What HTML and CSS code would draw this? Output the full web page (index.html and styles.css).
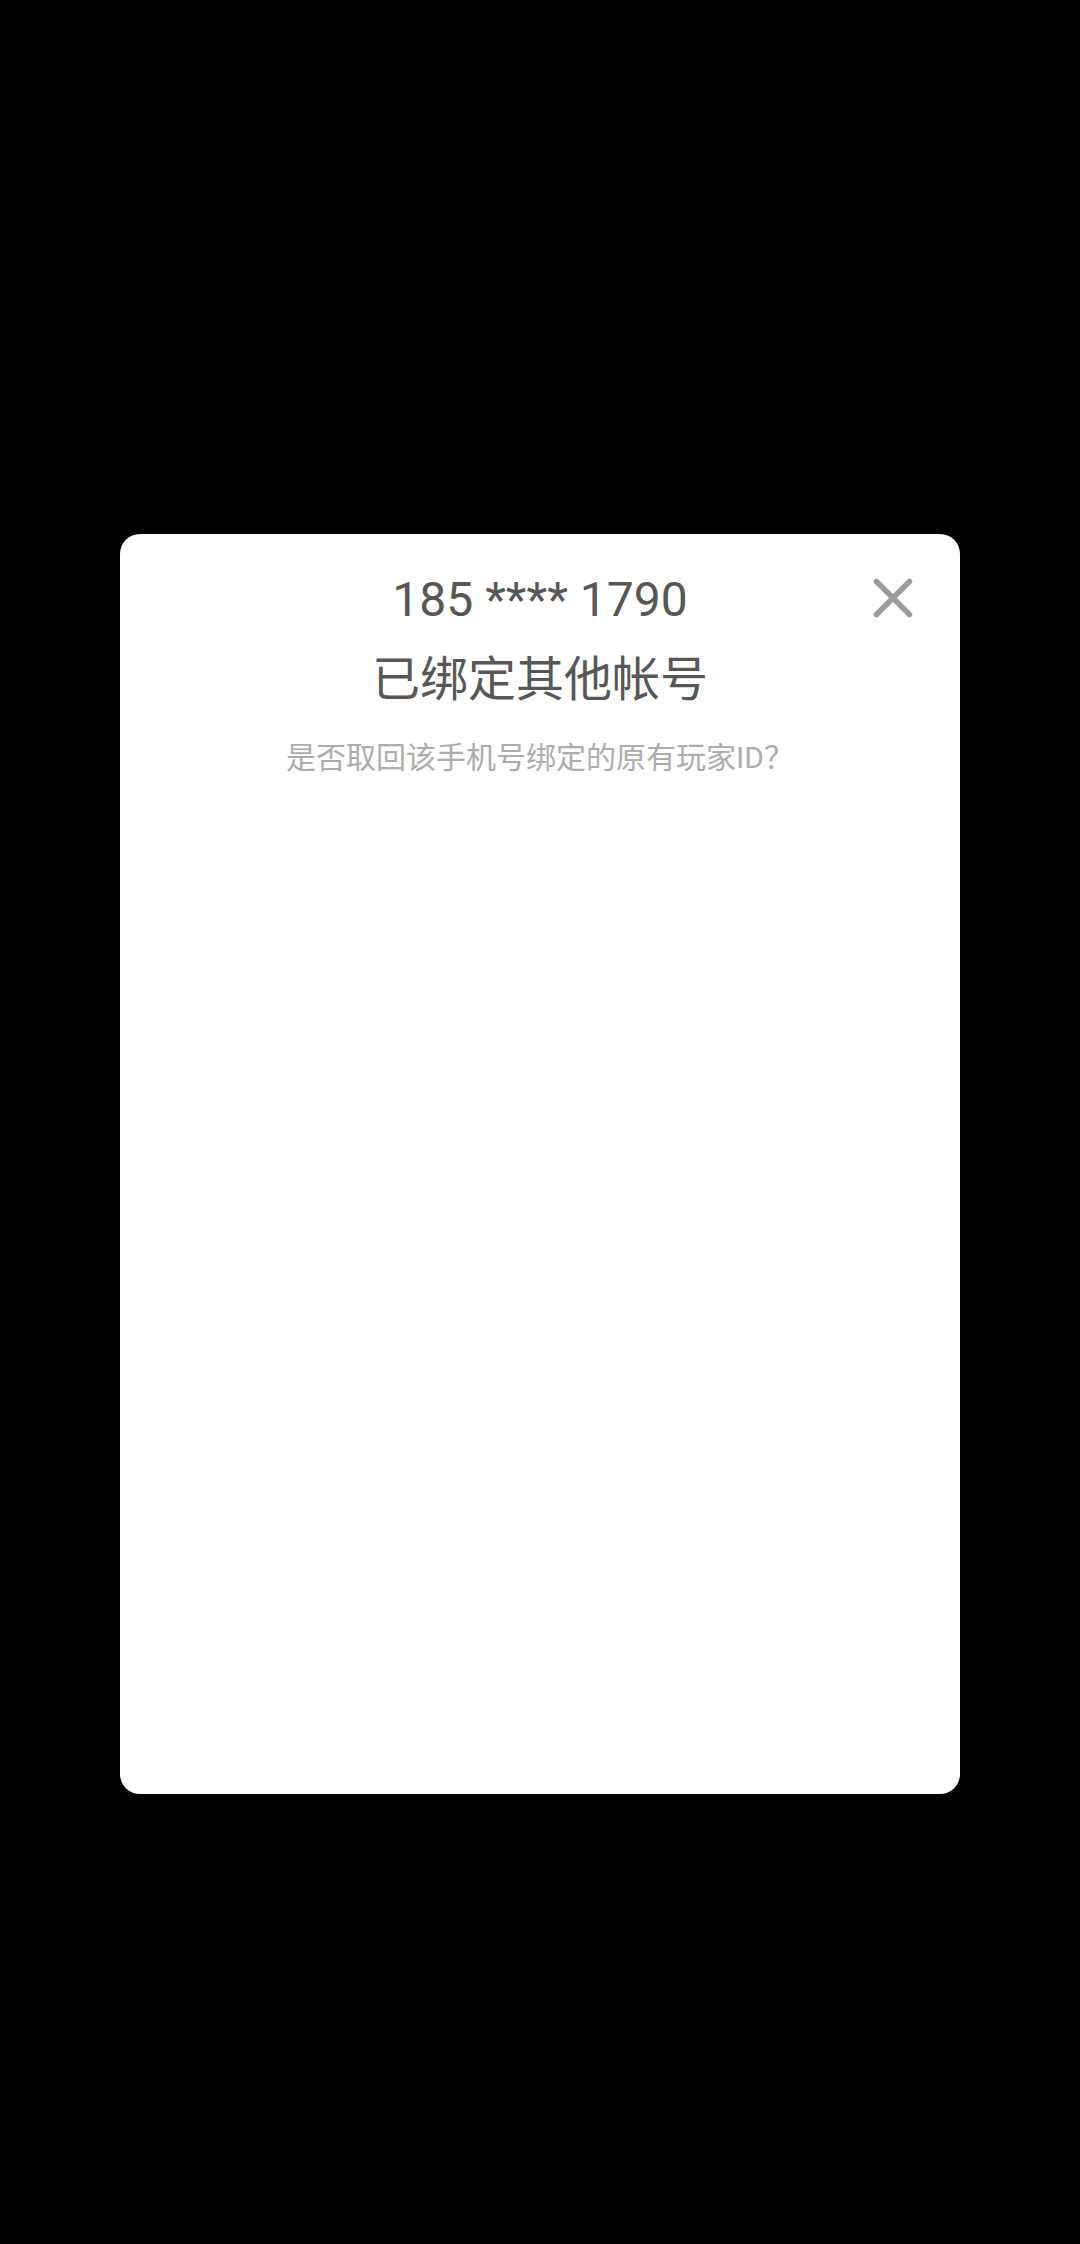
FILE: index.html
```html
<!DOCTYPE html>
<html lang="zh-CN">

<head>
    <meta charset="UTF-8">
    <meta name="viewport" content="width=device-width, initial-scale=1.0">
    <title>已绑定其他帐号</title>
    <link rel="stylesheet" href="styles.css">
</head>

<body>
    <div class="dialog">
        <button class="close" aria-label="关闭">
            <svg viewBox="0 0 40 40" width="40" height="40">
                <path d="M3.5 3.5 L36.5 36.5 M36.5 3.5 L3.5 36.5" stroke="#9c9c9c" stroke-width="5.5" stroke-linecap="round" fill="none" />
            </svg>
        </button>
        <div class="phone">185 **** 1790</div>
        <div class="title">已绑定其他帐号</div>
        <p class="hint">是否取回该手机号绑定的原有玩家ID？</p>
    </div>
</body>

</html>
```

FILE: styles.css
```css
* {
    margin: 0;
    padding: 0;
    box-sizing: border-box;
    font-family: Roboto, "Noto Sans CJK SC", sans-serif;
}

body {
    width: 1080px;
    height: 2244px;
    background-color: #000;
    overflow: hidden;
}

.dialog {
    position: relative;
    width: 840px;
    height: 1260px;
    margin: 534px auto 0;
    padding-top: 38px;
    background-color: #fff;
    border-radius: 20px;
    text-align: center;
}

.close {
    position: absolute;
    top: 44px;
    right: 47px;
    width: 40px;
    height: 40px;
    border: none;
    background: none;
    display: grid;
    place-content: center;
}

.phone {
    font-size: 48px;
    line-height: 56px;
    color: #575757;
}

.title {
    margin-top: 22px;
    font-size: 48px;
    line-height: 60px;
    color: #575757;
}

.hint {
    margin-top: 28px;
    font-size: 30px;
    line-height: 40px;
    color: #adadad;
}
```
